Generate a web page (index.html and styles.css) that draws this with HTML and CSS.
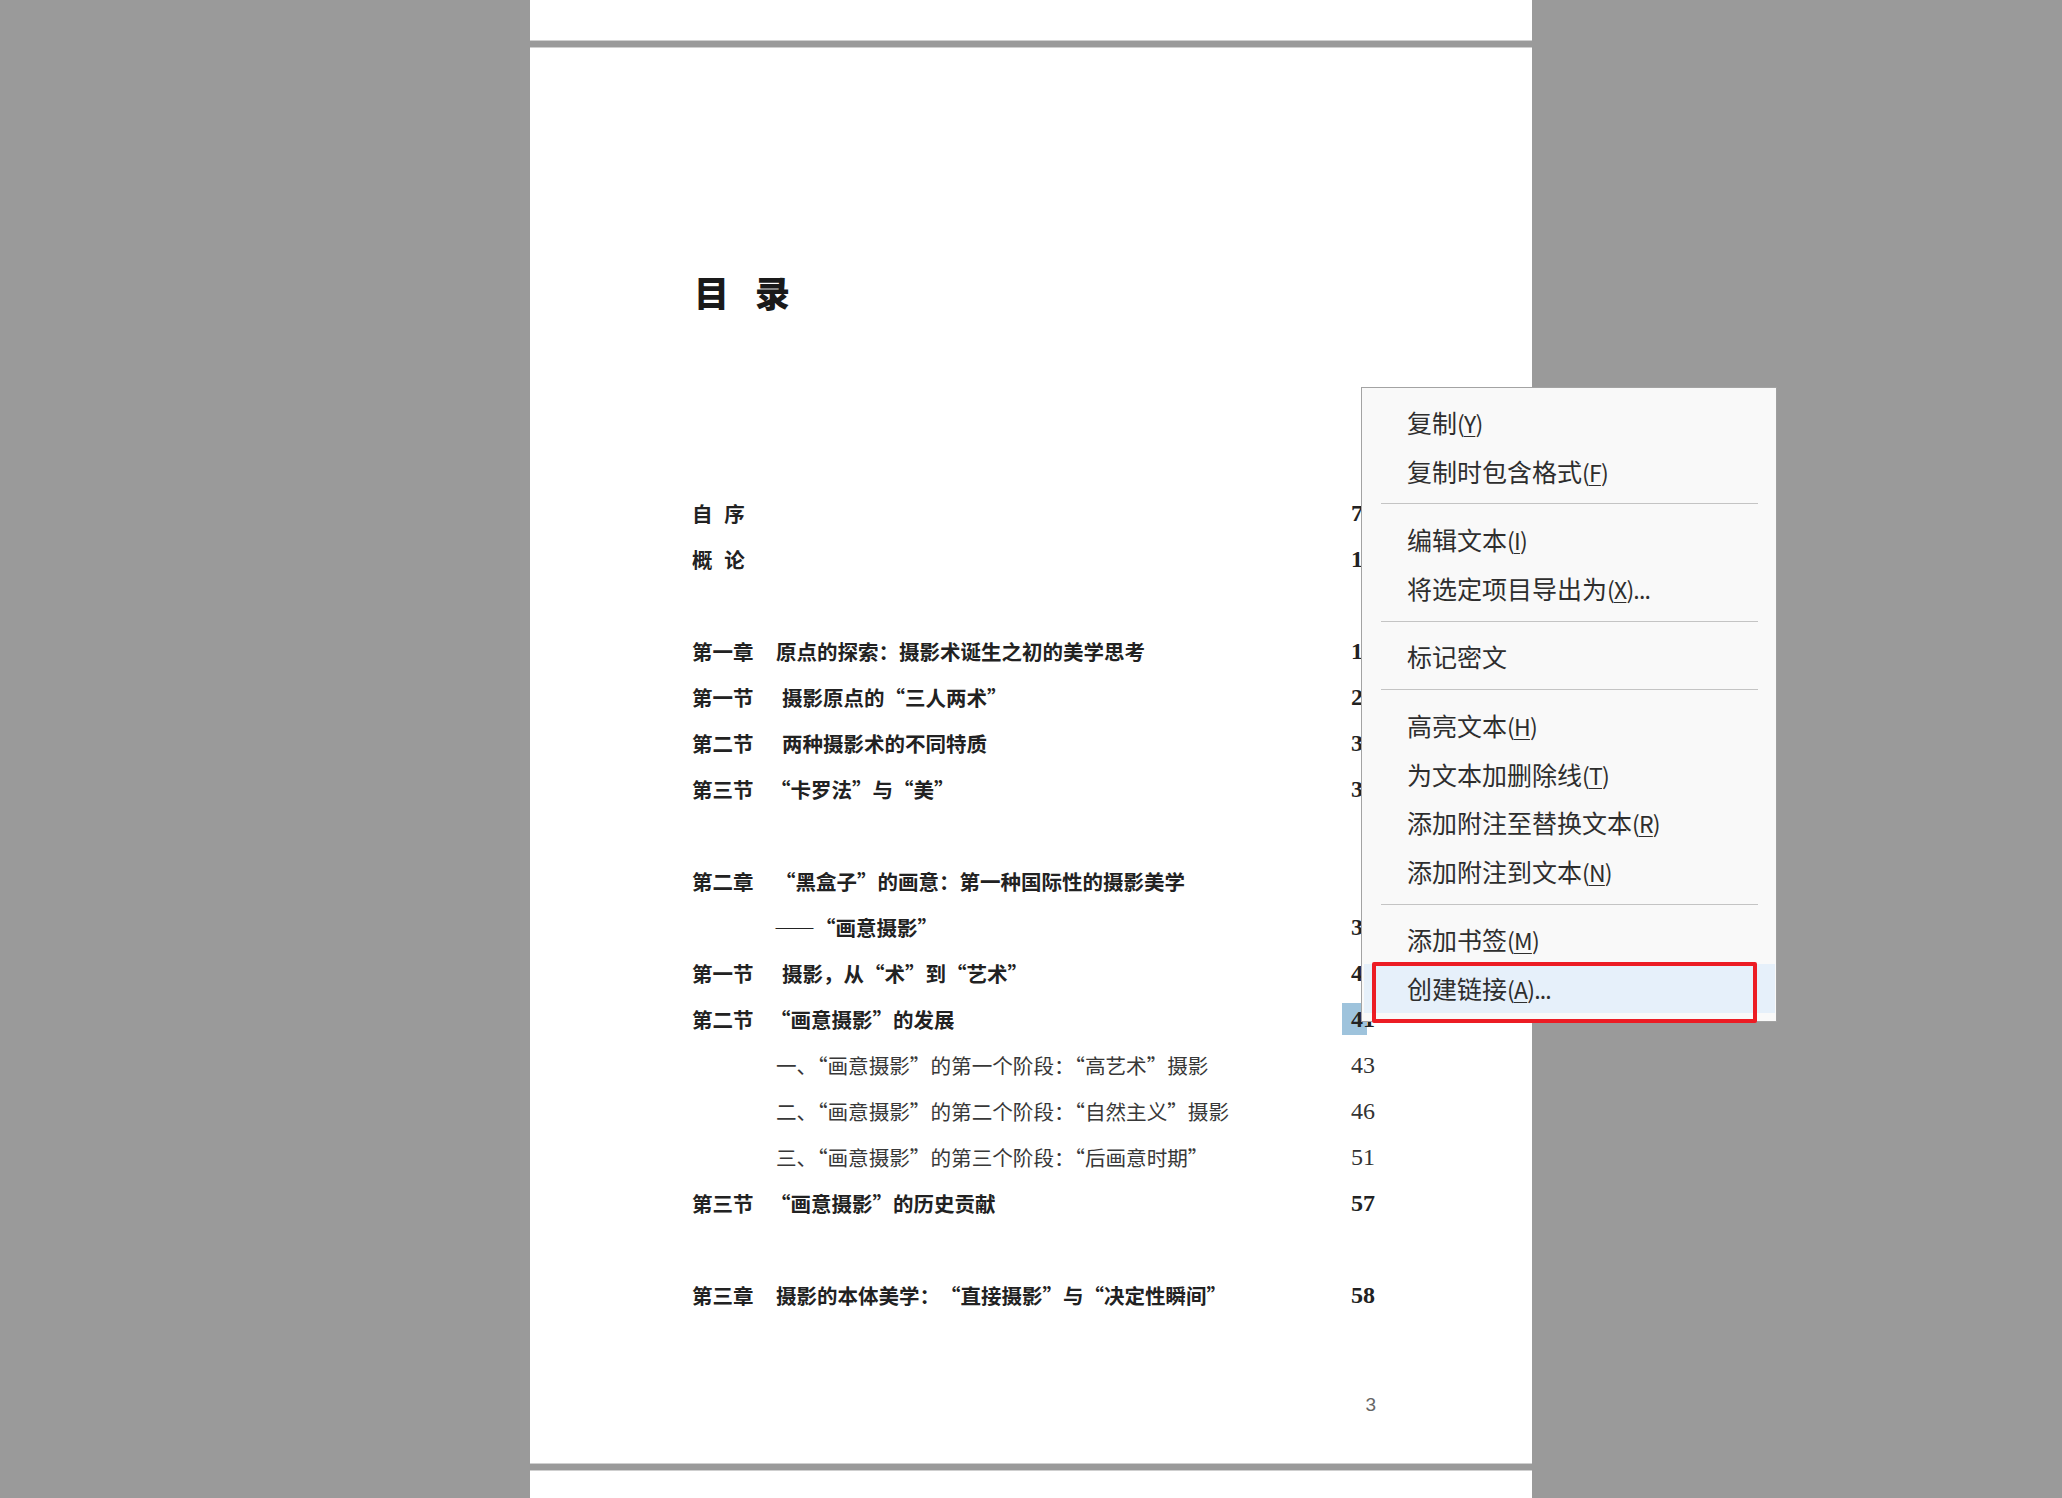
FILE: index.html
```html
<!DOCTYPE html>
<html lang="zh-CN">
<head>
<meta charset="utf-8">
<title>目录</title>
<link rel="stylesheet" href="styles.css">
</head>
<body>
<div class="viewer">
  <div class="page page-prev"></div>
  <div class="page page-main">
    <h1 class="toc-title">目 录</h1>
    <ul class="toc">
      <li class="row bold"><span class="lbl lbl-single">自 序</span><span class="num">7</span></li>
      <li class="row bold"><span class="lbl lbl-single">概 论</span><span class="num">1</span></li>
      <li class="row blank"></li>
      <li class="row bold"><span class="lbl lbl-ch">第一章</span><span class="ttl">原点的探索：摄影术诞生之初的美学思考</span><span class="num">15</span></li>
      <li class="row bold"><span class="lbl lbl-sec">第一节</span><span class="ttl">摄影原点的“三人两术”</span><span class="num">21</span></li>
      <li class="row bold"><span class="lbl lbl-sec">第二节</span><span class="ttl">两种摄影术的不同特质</span><span class="num">30</span></li>
      <li class="row bold"><span class="lbl lbl-q">第三节</span><span class="ttl">“卡罗法”与“美”</span><span class="num">34</span></li>
      <li class="row blank"></li>
      <li class="row bold"><span class="lbl lbl-ch2">第二章</span><span class="ttl">“黑盒子”的画意：第一种国际性的摄影美学</span></li>
      <li class="row bold"><span class="lbl lbl-dash"></span><span class="ttl">——“画意摄影”</span><span class="num">37</span></li>
      <li class="row bold"><span class="lbl lbl-sec">第一节</span><span class="ttl">摄影，从“术”到“艺术”</span><span class="num">40</span></li>
      <li class="row bold"><span class="lbl lbl-q">第二节</span><span class="ttl">“画意摄影”的发展</span><span class="num"><span class="sel">4</span>1</span></li>
      <li class="row sub"><span class="lbl lbl-ch"></span><span class="ttl">一、“画意摄影”的第一个阶段：“高艺术”摄影</span><span class="num">43</span></li>
      <li class="row sub"><span class="lbl lbl-ch"></span><span class="ttl">二、“画意摄影”的第二个阶段：“自然主义”摄影</span><span class="num">46</span></li>
      <li class="row sub"><span class="lbl lbl-ch"></span><span class="ttl">三、“画意摄影”的第三个阶段：“后画意时期”</span><span class="num">51</span></li>
      <li class="row bold"><span class="lbl lbl-q">第三节</span><span class="ttl">“画意摄影”的历史贡献</span><span class="num">57</span></li>
      <li class="row blank"></li>
      <li class="row bold"><span class="lbl lbl-ch">第三章</span><span class="ttl">摄影的本体美学：“直接摄影”与“决定性瞬间”</span><span class="num">58</span></li>
    </ul>
    <div class="folio">3</div>
  </div>
  <div class="page page-next"></div>

  <div class="ctx-menu">
    <div class="item">复制<span class="acc">(<u>Y</u>)</span></div>
    <div class="item">复制时包含格式<span class="acc">(<u>F</u>)</span></div>
    <div class="sep"></div>
    <div class="item">编辑文本<span class="acc">(<u>I</u>)</span></div>
    <div class="item">将选定项目导出为<span class="acc">(<u>X</u>)...</span></div>
    <div class="sep"></div>
    <div class="item">标记密文</div>
    <div class="sep"></div>
    <div class="item">高亮文本<span class="acc">(<u>H</u>)</span></div>
    <div class="item">为文本加删除线<span class="acc">(<u>T</u>)</span></div>
    <div class="item">添加附注至替换文本<span class="acc">(<u>R</u>)</span></div>
    <div class="item">添加附注到文本<span class="acc">(<u>N</u>)</span></div>
    <div class="sep"></div>
    <div class="item">添加书签<span class="acc">(<u>M</u>)</span></div>
    <div class="item active">创建链接<span class="acc">(<u>A</u>)...</span></div>
  </div>
  <div class="annot-box"></div>
</div>
</body>
</html>
```
FILE: styles.css
```css
html, body {
  margin: 0;
  padding: 0;
}
body {
  background: #9a9a9a;
  width: 2062px;
  height: 1498px;
  overflow: hidden;
  font-family: "Noto Sans CJK SC", "Liberation Sans", sans-serif;
}
.viewer {
  position: relative;
  height: 1498px;
  display: flex;
  flex-direction: column;
  align-items: center;
  gap: 6px;
}
.page {
  background: #fff;
  width: 1002px;
  box-sizing: border-box;
  flex-shrink: 0;
}
.page-prev {
  height: 41px;
  border-bottom: 1px solid #cfcfcf;
}
.page-main {
  height: 1417px;
  border-top: 1px solid #cfcfcf;
  border-bottom: 1px solid #cfcfcf;
  padding: 0 156px 46px 162px;
  display: flex;
  flex-direction: column;
}
.page-next {
  height: 40px;
  border-top: 1px solid #cfcfcf;
}

.toc-title {
  margin: 224px 0 0 2px;
  font-size: 35px;
  line-height: 40px;
  font-weight: 900;
  color: #1a1a1a;
  word-spacing: 18px;
}
.toc {
  list-style: none;
  margin: 178px 0 0 0;
  padding: 0;
}
.row {
  display: flex;
  height: 46px;
  line-height: 46px;
  font-size: 20.5px;
  white-space: nowrap;
  text-spacing-trim: space-all;
}
.row.bold {
  font-weight: 700;
  color: #222;
}
.row.sub {
  font-weight: 400;
  color: #383838;
  font-size: 20.6px;
  text-spacing-trim: normal;
}
.lbl {
  flex-shrink: 0;
}
.lbl-single { word-spacing: 7px; }
.lbl-ch { width: 84px; }
.lbl-ch2 { width: 83px; }
.lbl-dash { width: 82px; }
.lbl-sec { width: 90px; }
.lbl-q { width: 78px; }
.ttl {
  flex: 1;
}
.num {
  margin-left: auto;
  width: 25px;
  flex-shrink: 0;
  font-family: "Liberation Serif", serif;
  font-size: 24px;
}
.row.bold .num { font-weight: 700; }
.row.sub .num { font-weight: 400; color: #333; }
.sel {
  display: inline-block;
  line-height: 32px;
  margin-left: -9px;
  padding-left: 9px;
  padding-right: 4px;
  margin-right: -4px;
  background: #9ec3dc;
}

.folio {
  margin-top: auto;
  text-align: right;
  font-family: "Liberation Sans", sans-serif;
  font-size: 19px;
  line-height: 24px;
  color: #666;
}

.ctx-menu {
  position: absolute;
  left: 1361px;
  top: 387px;
  width: 416px;
  box-sizing: border-box;
  background: #f9f9f9;
  border: 1px solid #a3a3a3;
  border-right-color: #9f9f9f;
  padding: 10px 0 8px 0;
  font-size: 25px;
  color: #2e2e2e;
}
.item {
  height: 48.7px;
  line-height: 48.7px;
  padding-left: 45px;
  white-space: nowrap;
}
.acc {
  font-size: 23px;
  letter-spacing: -0.8px;
}
.item u {
  text-decoration-thickness: 1px;
  text-underline-offset: 3px;
}
.item.active {
  background: #e6f0fa;
  margin: 0 1px 0 2px;
  padding-left: 43px;
}
.sep {
  height: 1px;
  background: #c4c4c4;
  margin: 8px 18px 10.8px 19px;
}
.annot-box {
  position: absolute;
  left: 1372px;
  top: 962px;
  width: 385px;
  height: 61px;
  box-sizing: border-box;
  border: 4px solid #ec1c24;
  border-radius: 2px;
}
```
